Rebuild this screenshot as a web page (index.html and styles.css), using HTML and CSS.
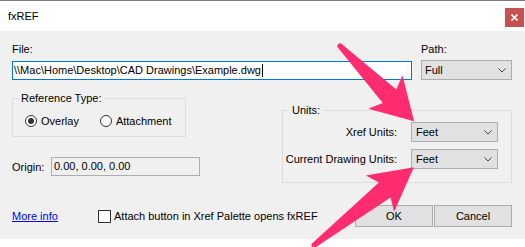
FILE: index.html
```html
<!DOCTYPE html>
<html>
<head>
<meta charset="utf-8">
<title>fxREF</title>
<link rel="stylesheet" href="styles.css">
</head>
<body>
<div class="window">
  <div class="titlebar">
    <span class="title">fxREF</span>
    <span class="close"><svg width="7" height="7" viewBox="0 0 7 7"><path d="M0.5 0.5 L6.5 6.5 M6.5 0.5 L0.5 6.5" stroke="#fff" stroke-width="1.6"/></svg></span>
  </div>
  <div class="dialog">
    <div class="row-top">
      <div class="file">
        <span class="lbl">File:</span>
        <div class="textbox">\\Mac\Home\Desktop\CAD Drawings\Example.dwg<span class="caret"></span></div>
      </div>
      <div class="path">
        <span class="lbl">Path:</span>
        <div class="combo combo-path"><span>Full</span><svg class="chev" width="8" height="5" viewBox="0 0 8 5"><path d="M0.5 0.5 L4 4 L7.5 0.5" fill="none" stroke="#444" stroke-width="1"/></svg></div>
      </div>
    </div>
    <div class="row-mid">
      <div class="left-col">
        <fieldset class="group ref">
          <legend>Reference Type:</legend>
          <div class="radios">
            <span class="opt"><span class="radio checked"></span>Overlay</span>
            <span class="opt"><span class="radio"></span>Attachment</span>
          </div>
        </fieldset>
        <div class="origin">
          <span class="olbl">Origin:</span>
          <div class="obox">0.00, 0.00, 0.00</div>
        </div>
      </div>
      <fieldset class="group units">
        <legend>Units:</legend>
        <div class="unit-row">
          <span class="ulbl">Xref Units:</span>
          <div class="combo ucombo"><span>Feet</span><svg class="chev" width="8" height="5" viewBox="0 0 8 5"><path d="M0.5 0.5 L4 4 L7.5 0.5" fill="none" stroke="#444" stroke-width="1"/></svg></div>
        </div>
        <div class="unit-row">
          <span class="ulbl">Current Drawing Units:</span>
          <div class="combo ucombo"><span>Feet</span><svg class="chev" width="8" height="5" viewBox="0 0 8 5"><path d="M0.5 0.5 L4 4 L7.5 0.5" fill="none" stroke="#444" stroke-width="1"/></svg></div>
        </div>
      </fieldset>
    </div>
    <div class="row-bottom">
      <a class="more" href="#">More info</a>
      <span class="check"><span class="box"></span>Attach button in Xref Palette opens fxREF</span>
      <div class="buttons">
        <button class="btn">OK</button>
        <button class="btn">Cancel</button>
      </div>
    </div>
  </div>
</div>
<svg class="annot" width="525" height="247" viewBox="0 0 525 247">
  <g transform="translate(339 45) rotate(45.4)">
    <path d="M0 -2.5 Q-2.5 0 0 2.5 L72 9.5 L66 24 L107 0 L66 -24 L72 -9.5 Z" fill="#ff2d6f"/>
  </g>
  <g transform="translate(313 246) rotate(-38)">
    <path d="M0 -2.5 Q-2.5 0 0 2.5 L91 9.5 L85 23 L128 0 L85 -23 L91 -9.5 Z" fill="#ff2d6f"/>
  </g>
</svg>
</body>
</html>
```
FILE: styles.css
```css
* { box-sizing: border-box; }
html, body { margin: 0; padding: 0; }
body {
  width: 525px;
  height: 247px;
  background: #fff;
  font-family: "Liberation Sans", Arial, sans-serif;
  font-size: 11px;
  color: #000;
  position: relative;
  overflow: hidden;
}
.window { border-top: 1px solid #7a7a7a; }
.titlebar {
  height: 30px;
  display: flex;
  align-items: center;
  justify-content: space-between;
  padding-left: 8px;
  background: #fff;
}
.title { font-size: 11px; }
.close {
  width: 19px;
  height: 19px;
  margin-top: 3px;
  margin-right: 1px;
  background: #c75050;
  display: flex;
  align-items: center;
  justify-content: center;
}
.dialog {
  height: 208px;
  background: #f0f0f0;
  padding: 11px 13px 0 12px;
}
.row-top { display: flex; gap: 9px; }
.file { width: 400px; }
.path { width: 91px; }
.lbl { display: block; height: 15px; line-height: 15px; }
.textbox {
  height: 19px;
  margin-top: 4px;
  border: 1px solid #0078d7;
  background: #fff;
  line-height: 17px;
  padding-left: 1px;
  white-space: nowrap;
}
.caret {
  display: inline-block;
  width: 1px;
  height: 13px;
  background: #000;
  vertical-align: -3px;
  margin-left: 1px;
}
.combo {
  height: 20px;
  border: 1px solid #adadad;
  background: #e1e1e1;
  display: flex;
  align-items: center;
  justify-content: space-between;
  padding: 0 5px 0 4px;
}
.combo-path { margin-top: 3px; padding-left: 3px; }
.chev { display: block; }

.row-mid {
  display: flex;
  justify-content: space-between;
  align-items: flex-start;
  margin-top: 11px;
}
.left-col { width: 189px; }
.group {
  margin: 0;
  min-width: 0;
  border: 1px solid #dcdcdc;
}
.group legend { padding: 0 2px; line-height: 15px; }
.ref { width: 174px; padding: 7px 6px 7px 6px; }
.radios { display: flex; align-items: center; height: 16px; padding-left: 6px; }
.opt { display: flex; align-items: center; gap: 4px; margin-right: 21px; }
.radio {
  width: 12px;
  height: 12px;
  border: 1px solid #333;
  border-radius: 50%;
  background: #fff;
  display: flex;
  align-items: center;
  justify-content: center;
}
.radio.checked::after {
  content: "";
  width: 6px;
  height: 6px;
  border-radius: 50%;
  background: #333;
}
.origin { display: flex; align-items: center; margin-top: 20px; }
.olbl { width: 39px; }
.obox {
  width: 149px;
  height: 19px;
  border: 1px solid #adadad;
  background: #f0f0f0;
  line-height: 17px;
  padding-left: 2px;
}
.units { width: 230px; margin-top: 12px; padding: 4px 13px 6px 6px; }
.units legend { padding: 0 3px; }
.unit-row {
  display: flex;
  justify-content: flex-end;
  align-items: center;
  gap: 14px;
  margin-bottom: 7px;
}
.ulbl { white-space: nowrap; }
.ucombo { width: 87px; flex: none; }

.row-bottom {
  display: flex;
  align-items: center;
  height: 22px;
  margin-top: 22px;
}
.more { width: 86px; color: #0000ff; text-decoration: underline; }
.check { display: flex; align-items: center; gap: 3px; }
.box {
  width: 13px;
  height: 13px;
  border: 1px solid #333;
  background: #fff;
}
.buttons { margin-left: auto; display: flex; gap: 1px; }
.btn {
  width: 78px;
  height: 22px;
  border: 1px solid #adadad;
  background: #e1e1e1;
  font-family: inherit;
  font-size: 11px;
  color: #000;
  padding: 0;
}
.annot { position: absolute; left: 0; top: 0; pointer-events: none; }
```
